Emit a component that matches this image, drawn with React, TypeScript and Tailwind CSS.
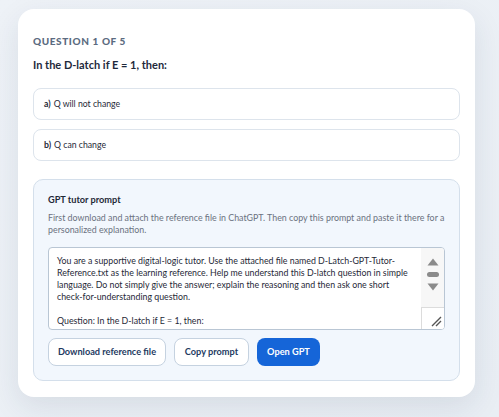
import React from 'react';

const font = { fontFamily: 'Lato, "Noto Sans", sans-serif' };

const promptLines = [
  'You are a supportive digital-logic tutor. Use the attached file named D-Latch-GPT-Tutor-',
  'Reference.txt as the learning reference. Help me understand this D-latch question in simple',
  'language. Do not simply give the answer; explain the reasoning and then ask one short',
  'check-for-understanding question.',
  '',
  'Question: In the D-latch if E = 1, then:',
];

const Option: React.FC<{ letter: string; text: string }> = ({ letter, text }) => (
  <div className="h-[32px] rounded-[8px] border border-[#dde4ec] bg-white px-[10px] flex items-center text-[8.7px] text-[#1f2937]">
    <span className="font-bold mr-[3px]">{letter})</span>
    <span>{text}</span>
  </div>
);

const FakeScrollbar = () => (
  <div className="w-[23px] flex flex-col bg-[#f7f7f7]">
    <div className="flex-1 flex flex-col items-center pt-[10px] gap-[6px]">
      <svg width="12" height="8" viewBox="0 0 12 8">
        <path d="M6 0.5 L11.5 7.5 L0.5 7.5 Z" fill="#8b8b8b" />
      </svg>
      <div className="w-[12px] h-[5px] rounded-full bg-[#8b8b8b]" />
      <svg width="12" height="8" viewBox="0 0 12 8">
        <path d="M0.5 0.5 L11.5 0.5 L6 7.5 Z" fill="#8b8b8b" />
      </svg>
    </div>
    <div className="h-[22px] border-t border-l border-[#dcdcdc] bg-white relative">
      <svg className="absolute right-[2px] bottom-[2px]" width="12" height="12" viewBox="0 0 12 12">
        <path d="M2 11 L11 2 M6 11 L11 6" stroke="#555" strokeWidth="1.4" />
      </svg>
    </div>
  </div>
);

export default function App() {
  return (
    <div
      className="w-[499px] h-[417px] bg-gradient-to-br from-[#eef2f7] to-[#e9eef4] pt-[9px] pl-[18px]"
      style={font}
    >
      <div className="w-[457px] h-[388px] rounded-[16px] bg-white shadow-[0_10px_30px_rgba(30,50,80,0.10)] px-[15px] pt-[25px]">
        <div className="text-[10px] leading-[14px] font-black tracking-[0.06em] text-[#5b6b80]">
          QUESTION 1 OF 5
        </div>
        <div className="mt-[10px] text-[11px] leading-[14px] font-bold text-[#1e293b]">
          In the D-latch if E = 1, then:
        </div>

        <div className="mt-[16px] flex flex-col gap-[9px]">
          <Option letter="a" text="Q will not change" />
          <Option letter="b" text="Q can change" />
        </div>

        <div className="mt-[18px] h-[202px] rounded-[10px] border border-[#d4dfeb] bg-[#f2f7fd] px-[14px] pt-[13px]">
          <div className="text-[9.2px] leading-[14px] font-bold text-[#1f2937]">GPT tutor prompt</div>
          <p className="mt-[5px] text-[8.85px] leading-[12px] text-[#6b7280]">
            First download and attach the reference file in ChatGPT. Then copy this prompt and paste it there for a
            personalized explanation.
          </p>

          <div className="mt-[11px] h-[83px] w-[397px] rounded-[4px] border border-[#b9c6d4] bg-white flex overflow-hidden">
            <div className="flex-1 px-[8px] pt-[7px] text-[8.8px] leading-[12px] text-[#1f2937] overflow-hidden">
              {promptLines.map((line, i) => (
                <div key={i} className="whitespace-nowrap h-[12px]">
                  {line}
                </div>
              ))}
            </div>
            <FakeScrollbar />
          </div>

          <div className="mt-[8px] flex gap-[8px]">
            <button className="h-[28px] w-[118px] rounded-[8px] border border-[#c5d2e0] bg-white text-[9.2px] font-bold text-[#1e3a5f]">
              Download reference file
            </button>
            <button className="h-[28px] w-[75px] rounded-[8px] border border-[#c5d2e0] bg-white text-[9.2px] font-bold text-[#1e3a5f]">
              Copy prompt
            </button>
            <button className="h-[28px] w-[63px] rounded-[8px] bg-[#1565d8] text-[9.2px] font-bold text-white">
              Open GPT
            </button>
          </div>
        </div>
      </div>
    </div>
  );
}
